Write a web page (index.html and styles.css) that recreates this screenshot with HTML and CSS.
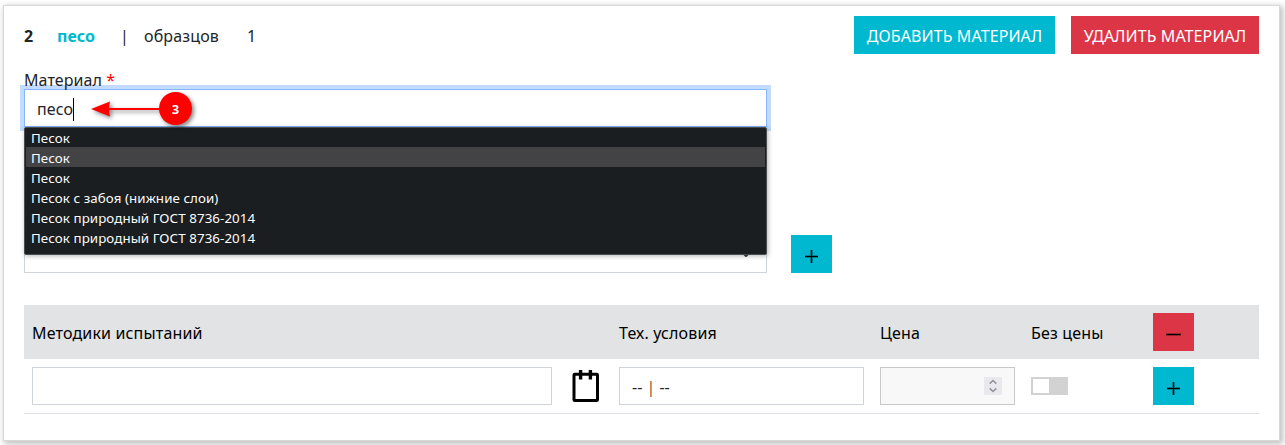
FILE: index.html
```html
<!DOCTYPE html>
<html lang="ru">
<head>
<meta charset="utf-8">
<title>Материал</title>
<link rel="stylesheet" href="styles.css">
</head>
<body>
<main class="card">
  <header class="head">
    <b class="num">2</b><b class="name">песо</b><span class="bar">|</span><span class="samples">образцов</span><span>1</span>
    <div class="actions">
      <button class="btn add">ДОБАВИТЬ МАТЕРИАЛ</button>
      <button class="btn remove">УДАЛИТЬ МАТЕРИАЛ</button>
    </div>
  </header>

  <section class="material">
    <div class="label">Материал <span class="req">*</span></div>
    <div class="control focused"><span class="typed">песо</span></div>
    <ul class="options">
      <li>Песок</li>
      <li class="active">Песок</li>
      <li>Песок</li>
      <li>Песок с забоя (нижние слои)</li>
      <li>Песок природный ГОСТ 8736-2014</li>
      <li>Песок природный ГОСТ 8736-2014</li>
    </ul>
    <svg class="callout" width="120" height="44" viewBox="0 0 120 44">
      <path d="M14 22 H80" stroke="#f00" stroke-width="2"/>
      <path d="M3 22 L22 14.5 Q20 22 22 29.5 Z" fill="#f00"/>
      <circle cx="87.5" cy="21.5" r="16.5" fill="#f00"/>
      <text x="87.5" y="26.5" class="callout-num">3</text>
    </svg>
  </section>

  <section class="choice">
    <div class="control select">
      <svg width="16" height="12" viewBox="0 0 16 12"><path d="M2 2 L8 8 L14 2" fill="none" stroke="#343a40" stroke-width="2" stroke-linecap="round" stroke-linejoin="round"/></svg>
    </div>
    <button class="square add"><svg width="15" height="15" viewBox="0 0 15 15"><path d="M1 7.5H14M7.5 1V14" class="halo"/><path d="M1 7.5H14M7.5 1V14" class="stroke"/></svg></button>
  </section>

  <section class="table">
    <div class="row thead">
      <span>Методики испытаний</span><span></span><span>Тех. условия</span><span>Цена</span><span>Без цены</span>
      <button class="square remove"><svg width="15" height="15" viewBox="0 0 15 15"><path d="M0 7.5H15" class="halo"/><path d="M.5 7.5H14.5" class="stroke"/></svg></button>
    </div>
    <div class="row tbody">
      <div class="control method"></div>
      <svg class="pad" width="28" height="34" viewBox="0 0 28 34" fill="none" stroke="#000" stroke-width="3"><rect x="2" y="5.2" width="23.5" height="26.3" rx=".8"/><path d="M8.6 1V10.5M18.4 1V10.5" stroke-width="3.4"/></svg>
      <div class="control tech">-- <span class="divider">|</span> --</div>
      <div class="control price"><span class="spin"><svg width="8" height="14" viewBox="0 0 8 14" fill="none" stroke="#9494a0" stroke-width="1.6"><path d="M.7 4.6 L4 1.5 L7.3 4.6M.7 9.4 L4 12.5 L7.3 9.4"/></svg></span></div>
      <span class="toggle"></span>
      <button class="square add"><svg width="15" height="15" viewBox="0 0 15 15"><path d="M1 7.5H14M7.5 1V14" class="halo"/><path d="M1 7.5H14M7.5 1V14" class="stroke"/></svg></button>
    </div>
  </section>
</main>
</body>
</html>
```
FILE: styles.css
```css
* { box-sizing: border-box; }
body {
  margin: 0;
  padding: 5px 5px 0 3px;
  height: 445px;
  overflow: hidden;
  background: #fff;
  color: #212529;
  font: 16px/24px "Noto Sans", sans-serif;
}
.card {
  height: 436px;
  padding: 10px 20px 0;
  border: 1px solid #d8d8d8;
  background: #fff;
  box-shadow: 2px 2px 6px 1px rgba(0, 0, 0, .25);
}
.head { display: flex; align-items: center; height: 38px; padding-top: 2px; }
.num { width: 33px; }
.name { width: 64px; color: #00b8d0; }
.bar { width: 23px; margin-left: -1px; margin-right: 1px; }
.samples { width: 103px; letter-spacing: .15px; }
.actions { display: flex; gap: 16px; margin: -2px 0 0 auto; }
.btn, .square { border: 0; border-radius: 0; font: inherit; color: #fff; }
.btn { height: 38px; padding: 2px 0 0; width: 201px; white-space: nowrap; letter-spacing: .1px; }
.btn.remove { width: 188px; }
.add { background: #00b8d0; }
.remove { background: #dc3545; }
.square {
  display: flex;
  justify-content: center;
  align-items: center;
  width: 41px;
  height: 38px;
  padding: 5px 0 0;
}
.halo { stroke: #000; stroke-opacity: .4; stroke-width: 2.6; }
.stroke { stroke: #000; stroke-width: 1; }

.material { position: relative; width: 743px; margin-top: 14px; }
.label { position: relative; z-index: 1; height: 21px; letter-spacing: .1px; }
.req { color: #f00; }
.control {
  display: flex;
  align-items: center;
  height: 38px;
  padding: 2px 12px 0;
  border: 1px solid #ced4da;
  background: #fff;
}
.focused { border-color: #86b7fe; box-shadow: 0 0 0 4px #c2dbfe; }
.typed { border-right: 1px solid #000; height: 23px; line-height: 23px; letter-spacing: .1px; }
.options {
  position: absolute;
  top: 59px;
  left: 0;
  z-index: 2;
  width: 743px;
  height: 128px;
  margin: 0;
  padding: 1px;
  border: 1px solid #4b4e50;
  border-radius: 2px;
  background: #1b1e20;
  box-shadow: 1px 1px 5px rgba(0, 0, 0, .3);
  color: #fcfcfc;
  font-size: 13.33px;
  line-height: 22px;
  letter-spacing: .08px;
  list-style: none;
}
.options li { height: 20px; padding-left: 5px; }
.options .active { background: #434345; }
.options li:first-child { height: 18px; line-height: 18px; }
.callout {
  position: absolute;
  top: 19px;
  left: 64px;
  z-index: 3;
  filter: drop-shadow(2px 2px 2px rgba(0, 0, 0, .5));
}
.callout-num { fill: #fff; font: bold 13px "Noto Sans", sans-serif; text-anchor: middle; }

.choice { display: flex; gap: 24px; margin-top: 108px; }
.select { width: 743px; justify-content: flex-end; padding-top: 0; }

.table { margin-top: 32px; }
.row {
  display: grid;
  grid-template-columns: 540px 47px 261px 151px 122px 41px;
  align-items: center;
  padding: 8px;
}
.thead { height: 54px; background: #e2e3e5; color: #000; letter-spacing: .16px; }
.thead span { padding-top: 2px; }
.tbody { height: 55px; border-bottom: 1px solid #dee2e6; }
.method { width: 520px; }
.pad { display: block; }
.tech { width: 245px; white-space: pre; }
.divider { color: #8a5430; }
.price { width: 135px; padding-top: 0; justify-content: flex-end; background: #f8f8f8; border-color: #c8c8c8; }
.spin { display: flex; align-items: center; justify-content: center; width: 18px; height: 18px; background: #e9e9ed; }
.toggle { width: 37px; height: 18px; border: 2px solid #d2d2d2; border-right-width: 19px; background: #fff; }
```
